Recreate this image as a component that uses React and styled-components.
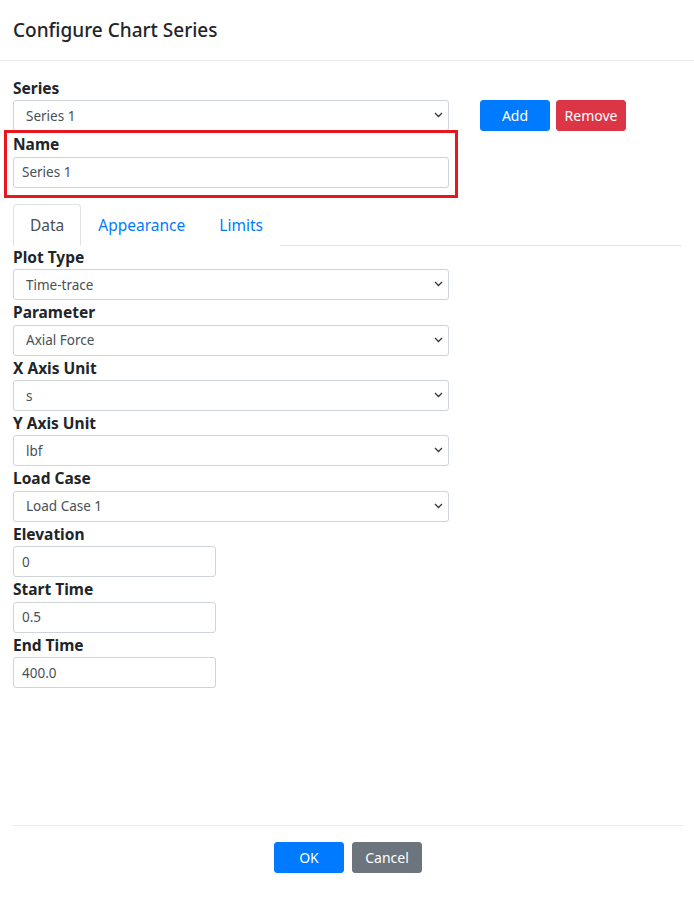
import styled, { createGlobalStyle } from 'styled-components';

const GlobalStyle = createGlobalStyle`
  * { box-sizing: border-box; }
  body {
    margin: 0;
    background: #fff;
    font-family: 'Noto Sans', 'Open Sans', sans-serif;
    color: #212529;
  }
`;

const Page = styled.div`
  min-height: 100vh;
  display: flex;
  flex-direction: column;
`;

const Header = styled.header`
  padding: 16px 13px;
  border-bottom: 1px solid #e9ecef;
  h5 {
    margin: 0;
    font-size: 19px;
    line-height: 28px;
    font-weight: 500;
  }
`;

const Body = styled.main`
  flex: 1;
  padding: 15px 13px 0;
`;

const Label = styled.label`
  display: block;
  font-size: 15.5px;
  font-weight: 700;
  line-height: 24.4px;
  color: #212529;
`;

const SeriesRow = styled.div`
  display: flex;
  align-items: flex-end;
  gap: 31px;
`;

const Field = styled.div`
  width: ${(p) => p.$width || '436px'};
  position: relative;
`;

const Highlight = styled.div`
  position: relative;
  width: 436px;
  margin-top: 1px;
  &::after {
    content: '';
    position: absolute;
    top: -2px;
    left: -9px;
    right: -9px;
    bottom: -10px;
    border: 3px solid #e8161f;
    pointer-events: none;
  }
`;

const SelectWrap = styled.div`
  position: relative;
  svg {
    position: absolute;
    right: 6px;
    top: 12px;
    pointer-events: none;
  }
`;

const Select = styled.select`
  appearance: none;
  width: 100%;
  height: 31px;
  padding: 0 24px 0 12px;
  font-family: inherit;
  font-size: 13.5px;
  color: #495057;
  background: #fff;
  border: 1px solid #ced4da;
  border-radius: 3px;
`;

const Input = styled.input`
  width: 100%;
  height: 31px;
  padding: 0 8px;
  font-family: inherit;
  font-size: 13.5px;
  color: #495057;
  background: #fff;
  border: 1px solid #ced4da;
  border-radius: 3px;
`;

const Button = styled.button`
  width: 70px;
  height: 31px;
  padding: 0;
  border: 1px solid ${(p) => p.$color};
  border-radius: 3px;
  background: ${(p) => p.$color};
  color: #fff;
  font-family: inherit;
  font-size: 14px;
  cursor: pointer;
`;

const Actions = styled.div`
  display: flex;
  gap: 6px;
`;

const Tabs = styled.nav`
  display: flex;
  margin-top: 16px;
  border-bottom: 1px solid #dee2e6;
`;

const Tab = styled.a`
  display: block;
  padding: 8px 16px;
  margin-bottom: -1px;
  font-size: 15.5px;
  line-height: 24px;
  text-decoration: none;
  cursor: pointer;
  border: 1px solid transparent;
  border-color: ${(p) => (p.$active ? '#dee2e6 #dee2e6 #fff' : 'transparent')};
  border-radius: 4px 4px 0 0;
  color: ${(p) => (p.$active ? '#495057' : '#007bff')};
  background: #fff;
`;

const FieldList = styled.div`
  margin-top: -1px;
`;

const Footer = styled.footer`
  margin: 0 11px 0 13px;
  padding: 16px 0 27px;
  border-top: 1px solid #e9ecef;
  display: flex;
  justify-content: center;
  gap: 8px;
`;

const Chevron = () => (
  <svg width="9" height="6" viewBox="0 0 9 6">
    <path d="M1 1l3.5 3.5L8 1" fill="none" stroke="#343a40" strokeWidth="1.3" />
  </svg>
);

const SelectField = ({ label, value }) => (
  <Field>
    <Label>{label}</Label>
    <SelectWrap>
      <Select defaultValue={value}>
        <option>{value}</option>
      </Select>
      <Chevron />
    </SelectWrap>
  </Field>
);

const TextField = ({ label, value, width }) => (
  <Field $width={width}>
    <Label>{label}</Label>
    <Input defaultValue={value} />
  </Field>
);

const selects = [
  ['Plot Type', 'Time-trace'],
  ['Parameter', 'Axial Force'],
  ['X Axis Unit', 's'],
  ['Y Axis Unit', 'lbf'],
  ['Load Case', 'Load Case 1'],
];

const inputs = [
  ['Elevation', '0'],
  ['Start Time', '0.5'],
  ['End Time', '400.0'],
];

export default function App() {
  return (
    <Page>
      <GlobalStyle />
      <Header>
        <h5>Configure Chart Series</h5>
      </Header>
      <Body>
        <SeriesRow>
          <SelectField label="Series" value="Series 1" />
          <Actions>
            <Button $color="#007bff">Add</Button>
            <Button $color="#dc3545">Remove</Button>
          </Actions>
        </SeriesRow>
        <Highlight>
          <Label>Name</Label>
          <Input defaultValue="Series 1" />
        </Highlight>
        <Tabs>
          <Tab $active>Data</Tab>
          <Tab>Appearance</Tab>
          <Tab>Limits</Tab>
        </Tabs>
        <FieldList>
          {selects.map(([l, v]) => (
            <SelectField key={l} label={l} value={v} />
          ))}
          {inputs.map(([l, v]) => (
            <TextField key={l} label={l} value={v} width="203px" />
          ))}
        </FieldList>
      </Body>
      <Footer>
        <Button $color="#007bff">OK</Button>
        <Button $color="#6c757d">Cancel</Button>
      </Footer>
    </Page>
  );
}
